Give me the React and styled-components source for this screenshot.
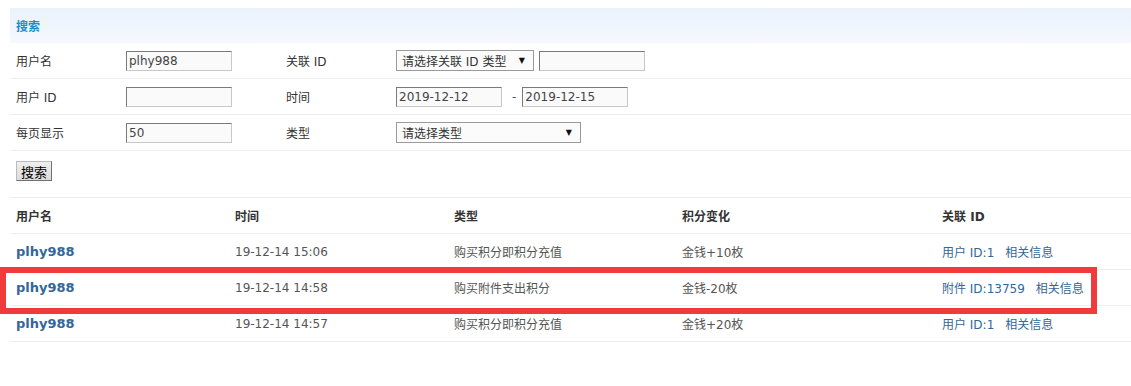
import React from 'react';
import styled, { createGlobalStyle } from 'styled-components';

const GlobalStyle = createGlobalStyle`
  body {
    margin: 0;
    background: #fff;
    font-family: "DejaVu Sans", "Noto Sans CJK SC", sans-serif;
    font-size: 12px;
    color: #333;
  }
`;

const Page = styled.div`
  padding: 8px 0 0 10px;
`;

const Panel = styled.div`
  width: 1121px;
`;

const PanelTitle = styled.div`
  height: 35px;
  display: flex;
  align-items: center;
  padding-left: 6px;
  background: linear-gradient(#eaf2fc, #f5f9fe);
  color: #1a8fc6;
  font-weight: bold;
  font-size: 12px;
`;

const FormRow = styled.div`
  display: grid;
  grid-template-columns: 110px 160px 110px 1fr;
  align-items: center;
  height: ${p => p.$h || 35}px;
  border-bottom: 1px solid #eeeeee;
`;

const Label = styled.div`
  padding-left: 6px;
  color: #333;
`;

const Field = styled.div`
  display: flex;
  align-items: center;
  padding-left: 6px;
  gap: ${p => p.$gap || 5}px;
`;

const TextInput = styled.input`
  box-sizing: border-box;
  width: ${p => p.$w || 106}px;
  height: 20px;
  margin: 0;
  padding: 0 2px;
  border: 1px solid #c8c8c8;
  border-top-color: #7a7a7a;
  border-left-color: #7a7a7a;
  background: #fafafa;
  font-family: "DejaVu Sans", "Noto Sans CJK SC", sans-serif;
  font-size: 12px;
  color: #444;
  outline: none;
`;

const Select = styled.div`
  box-sizing: border-box;
  width: ${p => p.$w}px;
  height: 21px;
  display: flex;
  align-items: center;
  justify-content: space-between;
  padding: 0 8px 0 5px;
  border: 1px solid #9a9a9a;
  background: #fbfbfb;
  color: #333;
`;

const Arrow = styled.span`
  font-size: 8px;
  color: #111;
`;

const Dash = styled.span`
  color: #555;
  padding: 0 1px 0 5px;
`;

const Button = styled.button`
  margin: 0 0 6px 6px;
  height: 20px;
  padding: 0 4px;
  border: 1px solid #707070;
  border-top-color: #bbb;
  border-left-color: #bbb;
  background: linear-gradient(#eeeeee, #dcdcdc);
  font-family: "Noto Sans CJK SC", sans-serif;
  font-size: 13px;
  color: #000;
`;

const Table = styled.div`
  width: 1121px;
`;

const Row = styled.div`
  position: relative;
  display: grid;
  grid-template-columns: 219px 219px 228px 260px 1fr;
  align-items: center;
  height: 35px;
  border-bottom: 1px solid #eeeeee;
  font-weight: ${p => (p.$head ? 'bold' : 'normal')};
  color: ${p => (p.$head ? '#333' : '#555')};
`;

const Cell = styled.div`
  padding-left: 6px;
  white-space: nowrap;
`;

const UserLink = styled.a`
  color: #336699;
  font-weight: bold;
  font-size: 13px;
  text-decoration: none;
`;

const Link = styled.a`
  color: #336699;
  text-decoration: none;
  margin-right: 11px;
`;

const Highlight = styled.div`
  position: absolute;
  left: -10px;
  top: -3px;
  width: 1085px;
  height: 35px;
  border: 6px solid #f03a3c;
  pointer-events: none;
`;

const rows = [
  { time: '19-12-14 15:06', type: '购买积分即积分充值', change: '金钱+10枚', ref: '用户 ID:1' },
  { time: '19-12-14 14:58', type: '购买附件支出积分', change: '金钱-20枚', ref: '附件 ID:13759', marked: true },
  { time: '19-12-14 14:57', type: '购买积分即积分充值', change: '金钱+20枚', ref: '用户 ID:1' },
];

export default function App() {
  return (
    <Page>
      <GlobalStyle />
      <Panel>
        <PanelTitle>搜索</PanelTitle>
        <FormRow>
          <Label>用户名</Label>
          <Field><TextInput defaultValue="plhy988" /></Field>
          <Label>关联 ID</Label>
          <Field>
            <Select $w={138}>请选择关联 ID 类型<Arrow>▼</Arrow></Select>
            <TextInput />
          </Field>
        </FormRow>
        <FormRow>
          <Label>用户 ID</Label>
          <Field><TextInput /></Field>
          <Label>时间</Label>
          <Field $gap={0}>
            <TextInput defaultValue="2019-12-12" />
            <Dash>-</Dash>
            <TextInput defaultValue="2019-12-15" />
          </Field>
        </FormRow>
        <FormRow>
          <Label>每页显示</Label>
          <Field><TextInput defaultValue="50" /></Field>
          <Label>类型</Label>
          <Field><Select $w={185}>请选择类型<Arrow>▼</Arrow></Select></Field>
        </FormRow>
        <FormRow $h={46}>
          <div><Button>搜索</Button></div>
        </FormRow>
      </Panel>
      <Table>
        <Row $head>
          <Cell>用户名</Cell>
          <Cell>时间</Cell>
          <Cell>类型</Cell>
          <Cell>积分变化</Cell>
          <Cell>关联 ID</Cell>
        </Row>
        {rows.map((r, i) => (
          <Row key={i}>
            <Cell><UserLink href="#">plhy988</UserLink></Cell>
            <Cell>{r.time}</Cell>
            <Cell>{r.type}</Cell>
            <Cell>{r.change}</Cell>
            <Cell><Link href="#">{r.ref}</Link><Link href="#">相关信息</Link></Cell>
            {r.marked && <Highlight />}
          </Row>
        ))}
      </Table>
    </Page>
  );
}
